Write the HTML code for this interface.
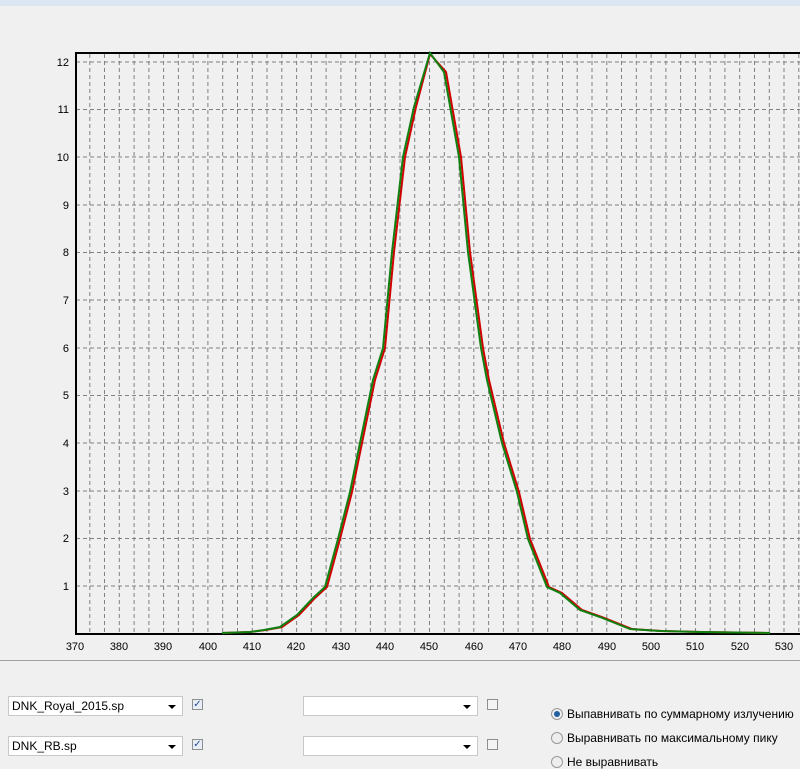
<!DOCTYPE html>
<html><head><meta charset="utf-8"><style>
body{margin:0;width:800px;height:769px;background:#f0f0f0;overflow:hidden;font-family:"Liberation Sans",sans-serif;position:relative}
.top{position:absolute;left:0;top:0;width:800px;height:6px;background:#dbe6f3}
.sel{position:absolute;width:175px;height:20px;background:#fff;border:1px solid #c8c8c8;box-sizing:border-box;font-size:12px;line-height:18px;padding-left:3px}
.sel:after{content:"";position:absolute;right:6px;top:8px;border-left:4px solid transparent;border-right:4px solid transparent;border-top:4px solid #000}
.cb{position:absolute;width:11px;height:11px;border:1px solid #8f8f8f;background:#e8eef6;box-sizing:border-box;font-size:10px;line-height:9px;text-align:center;color:#2a4f9a}
.rd{position:absolute;left:551px;width:12px;height:12px;border-radius:50%;border:1px solid #999;background:#eee;box-sizing:border-box}
.rl{position:absolute;left:567px;font-size:12px}
</style></head><body>
<div class="top"></div>
<svg width="800" height="769" style="position:absolute;left:0;top:0" font-family="Liberation Sans" font-size="11">
<g stroke="#808080" stroke-dasharray="4,3" stroke-width="1">
<path d="M89.8 54V633M104.5 54V633M119.3 54V633M134.1 54V633M148.9 54V633M163.6 54V633M178.4 54V633M193.2 54V633M207.9 54V633M222.7 54V633M237.5 54V633M252.3 54V633M267 54V633M281.8 54V633M296.6 54V633M311.3 54V633M326.1 54V633M340.9 54V633M355.7 54V633M370.4 54V633M385.2 54V633M400 54V633M414.7 54V633M429.5 54V633M444.3 54V633M459.1 54V633M473.8 54V633M488.6 54V633M503.4 54V633M518.1 54V633M532.9 54V633M547.7 54V633M562.5 54V633M577.2 54V633M592 54V633M606.8 54V633M621.5 54V633M636.3 54V633M651.1 54V633M665.9 54V633M680.6 54V633M695.4 54V633M710.2 54V633M724.9 54V633M739.7 54V633M754.5 54V633M769.3 54V633M784 54V633M798.8 54V633"/>
<path d="M76 62H800M76 109.5H800M76 157H800M76 205H800M76 252.5H800M76 300H800M76 348H800M76 395.5H800M76 443H800M76 491H800M76 538.5H800M76 586H800"/>
</g>
<path d="M75 53H800M76 53V634H800" stroke="#000" stroke-width="2" fill="none"/>
<g fill="#000" text-anchor="end"><text x="69" y="66">12</text><text x="69" y="113">11</text><text x="69" y="161">10</text><text x="69" y="209">9</text><text x="69" y="256">8</text><text x="69" y="304">7</text><text x="69" y="352">6</text><text x="69" y="399">5</text><text x="69" y="447">4</text><text x="69" y="495">3</text><text x="69" y="542">2</text><text x="69" y="590">1</text></g>
<g fill="#000" text-anchor="middle"><text x="75" y="650">370</text><text x="119" y="650">380</text><text x="163" y="650">390</text><text x="208" y="650">400</text><text x="252" y="650">410</text><text x="296" y="650">420</text><text x="341" y="650">430</text><text x="385" y="650">440</text><text x="429" y="650">450</text><text x="474" y="650">460</text><text x="518" y="650">470</text><text x="562" y="650">480</text><text x="607" y="650">490</text><text x="651" y="650">500</text><text x="695" y="650">510</text><text x="740" y="650">520</text><text x="784" y="650">530</text></g>
<polyline fill="none" stroke="#d00000" stroke-width="2" points="222,633 250,632 266,630 282,627 299,615 315,598 327,587 340,539 352,492 362,443 375,380 385,348 394,252 405,157 416,107 430,54 446,72 461,157 470,252 483,348 489,380 504,443 519,492 530,539 549,587 562,593 582,610 602,617 632,629 662,631 702,632 770,633"/>
<polyline fill="none" stroke="#108010" stroke-width="2" points="222,633 250,632 264,630 280,627 297,615 313,598 325,587 338,539 350,492 360,443 373,380 383,348 392,252 403,157 414,107 430,53 444,72 459,157 468,252 481,348 487,380 502,443 517,492 528,539 547,587 560,593 580,610 600,617 630,629 660,631 700,632 770,633"/>
<path d="M0 660.5H800" stroke="#a0a0a0"/>
</svg>
<div class="sel" style="left:8px;top:696px">DNK_Royal_2015.sp</div><div class="cb" style="left:192px;top:699px">✓</div>
<div class="sel" style="left:8px;top:736px">DNK_RB.sp</div><div class="cb" style="left:192px;top:739px">✓</div>
<div class="sel" style="left:303px;top:696px"></div><div class="cb" style="left:487px;top:699px;background:#f4f4f4"></div>
<div class="sel" style="left:303px;top:736px"></div><div class="cb" style="left:487px;top:739px;background:#f4f4f4"></div>
<div class="rd" style="top:708px"><div style="margin:2px;width:6px;height:6px;border-radius:50%;background:#1f5f9f"></div></div><div class="rl" style="top:707px">Выпавнивать по суммарному излучению</div>
<div class="rd" style="top:732px"></div><div class="rl" style="top:731px">Выравнивать по максимальному пику</div>
<div class="rd" style="top:756px"></div><div class="rl" style="top:755px">Не выравнивать</div>
</body></html>
